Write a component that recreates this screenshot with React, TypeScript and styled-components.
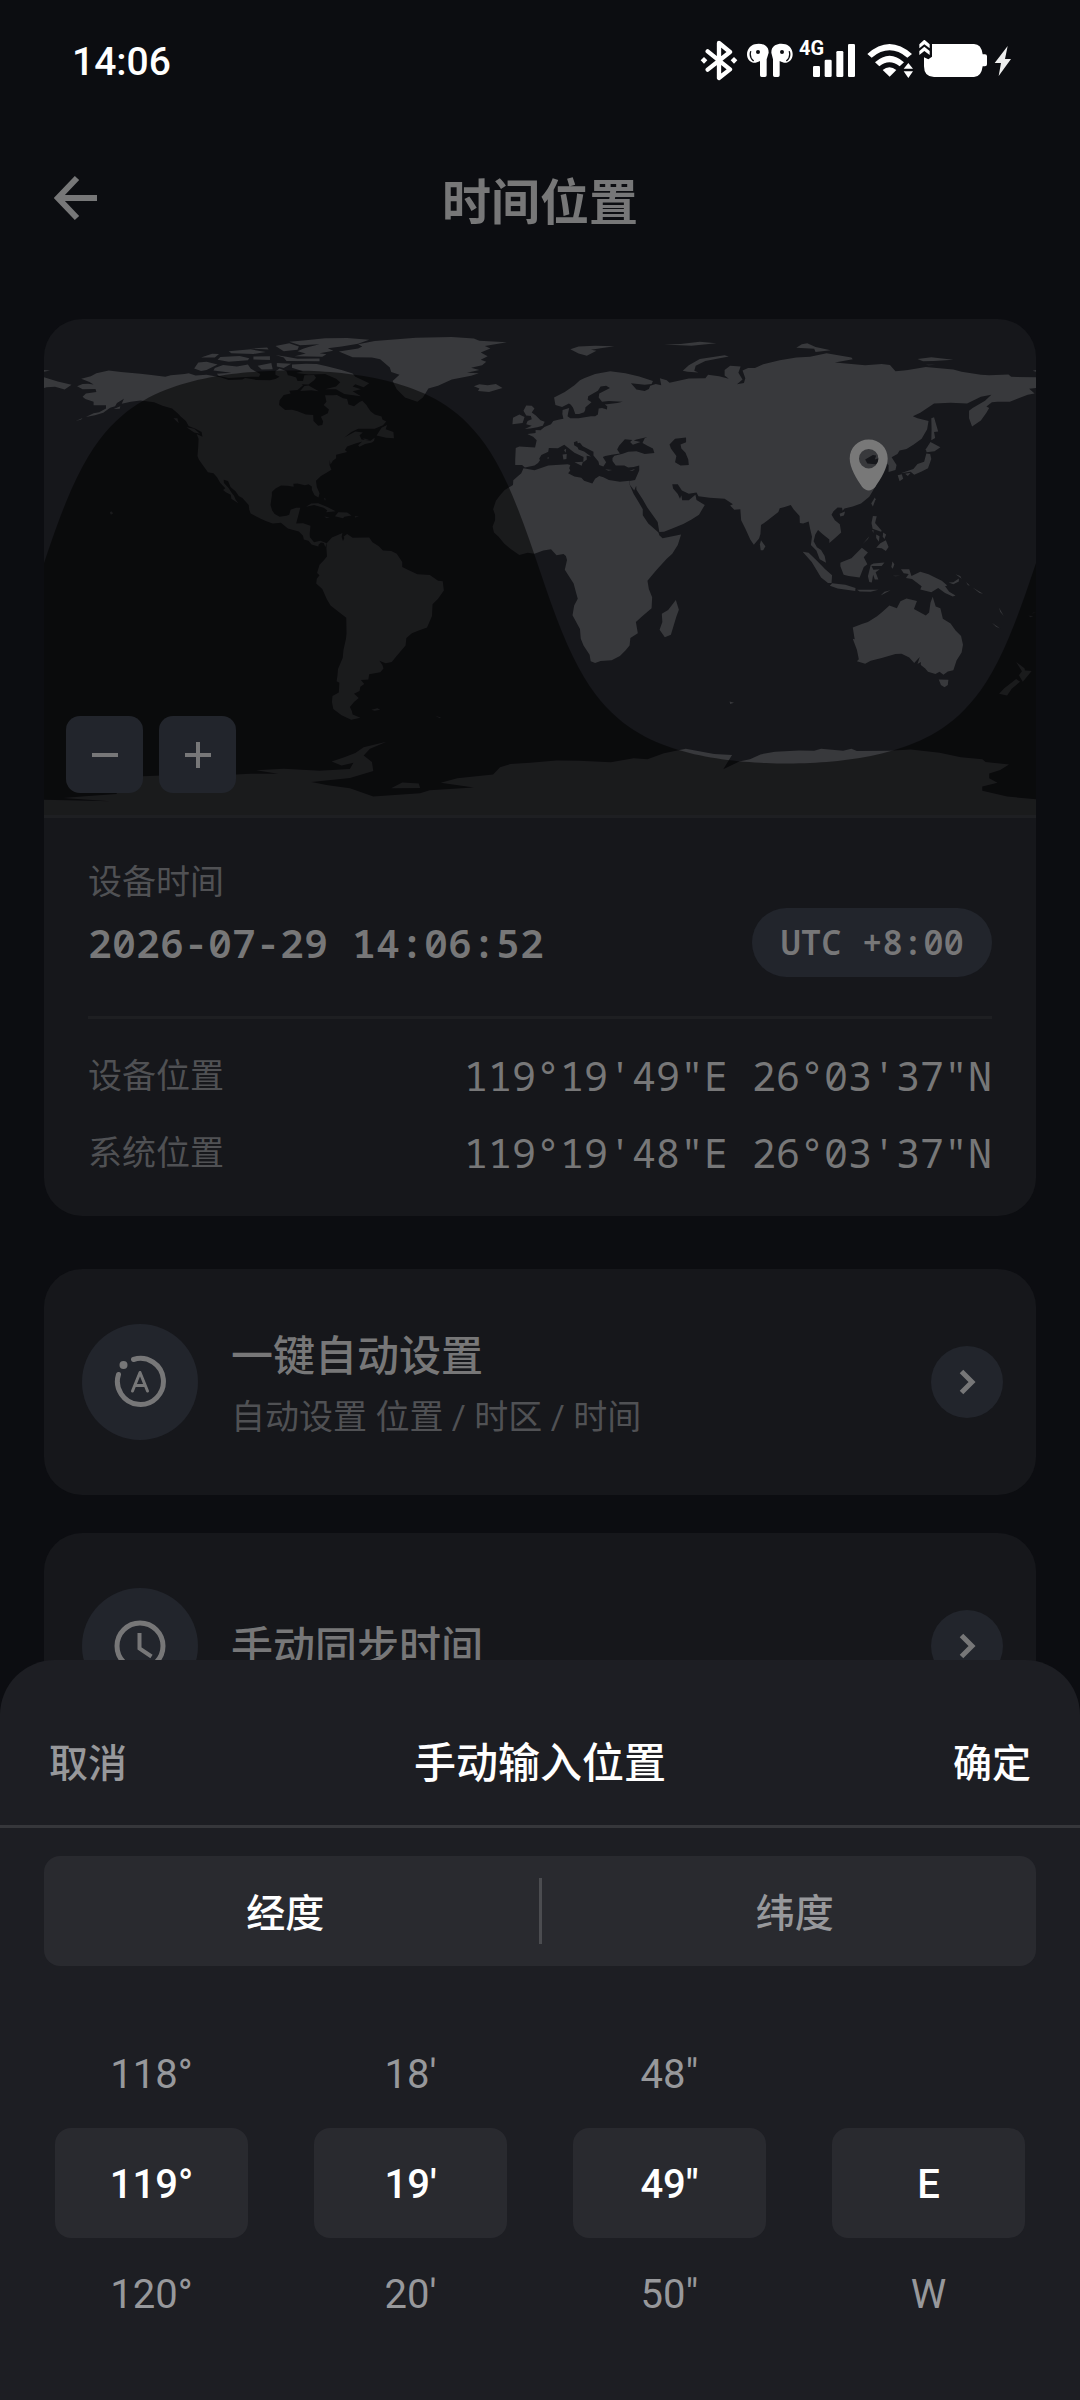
import { useState } from 'react';
import styled, { createGlobalStyle } from 'styled-components';

const GlobalStyle = createGlobalStyle`
  * {
    box-sizing: border-box;
  }
  body {
    margin: 0;
    background-color: #0c0d11;
    font-family: Roboto, "Noto Sans CJK SC", sans-serif;
  }
  button {
    padding: 0;
    border: none;
    background: none;
    color: inherit;
    font: inherit;
    cursor: pointer;
  }
  svg {
    display: block;
    flex: none;
  }
`;

const Page = styled.div`
  min-height: 100vh;
  color: #777778;
`;
const StatusBar = styled.div`
  display: flex;
  align-items: center;
  justify-content: space-between;
  height: 120px;
  padding: 0 68px 0 72px;
  color: #fff;
`;
const Clock = styled.span`
  padding-top: 3px;
  font-size: 39px;
  font-weight: 500;
`;
const StatusIcons = styled.div`
  display: flex;
  gap: 6px;
`;
const Header = styled.header`
  display: grid;
  grid-template-columns: 1fr auto 1fr;
  align-items: center;
  height: 156px;
  margin-bottom: 43px;
  padding: 0 54px;
`;
const BackButton = styled.button`
  justify-self: start;
`;
const PageTitle = styled.h1`
  margin: 0;
  font-size: 49px;
  font-weight: 700;
`;
const Content = styled.main`
  display: flex;
  flex-direction: column;
  gap: 38px;
  padding: 0 44px;
`;
const Card = styled.section`
  overflow: hidden;
  border-radius: 38px;
  background-color: #16171b;
`;
const DeviceCard = styled(Card)`
  margin-bottom: 15px;
`;
const MapBox = styled.div`
  position: relative;
  border-bottom: 3px solid #1e1f22;
`;
const MapSvg = styled.svg`
  width: 100%;
  height: auto;
`;
const ZoomButtons = styled.div`
  position: absolute;
  left: 22px;
  bottom: 22px;
  display: flex;
  gap: 16px;
`;
const ZoomButton = styled.button`
  display: grid;
  place-items: center;
  width: 77px;
  height: 77px;
  border-radius: 14px;
  background-color: #22252c;
`;
const DeviceInfo = styled.div`
  padding: 42px 44px 25px;
`;
const Label = styled.span`
  display: block;
  font-size: 34px;
  line-height: 44px;
  color: #505154;
`;
const InfoRow = styled.div`
  display: flex;
  align-items: center;
  justify-content: space-between;
  height: 77px;
`;
const DeviceTime = styled.span`
  font-family: "Noto Sans Mono", "DejaVu Sans Mono", monospace;
  font-size: 40px;
  font-weight: 600;
`;
const Coordinates = styled.span`
  font-family: "Noto Sans Mono", "DejaVu Sans Mono", monospace;
  font-size: 40px;
`;
const ZonePill = styled.span`
  padding: 0 28px;
  border-radius: 35px;
  background-color: #22252c;
  font-family: "Noto Sans Mono", "DejaVu Sans Mono", monospace;
  font-size: 34px;
  font-weight: 600;
  line-height: 69px;
`;
const Divider = styled.hr`
  height: 3px;
  margin: 35px 0 18px;
  border: none;
  background-color: #1e1f22;
`;
const ActionCard = styled(Card)`
  display: flex;
  align-items: center;
  height: 226px;
  padding: 0 33px 0 38px;
`;
const ActionIcon = styled.div`
  display: grid;
  place-items: center;
  width: 116px;
  height: 116px;
  border-radius: 50%;
  background-color: #22252c;
`;
const ActionText = styled.div`
  display: flex;
  flex: 1;
  flex-direction: column;
  gap: 10px;
  margin-left: 33px;
  padding-top: 3px;
`;
const ActionTitle = styled.h2`
  margin: 0;
  font-size: 42px;
  font-weight: 500;
  line-height: 56px;
`;
const ArrowButton = styled.button`
  display: grid;
  place-items: center;
  width: 72px;
  height: 72px;
  border-radius: 50%;
  background-color: #22252c;
`;
const Sheet = styled.div`
  position: fixed;
  right: 0;
  bottom: 0;
  left: 0;
  padding-bottom: 52px;
  border-radius: 55px 55px 0 0;
  background-color: #1d1e23;
  color: #97989b;
`;
const SheetHeader = styled.div`
  display: grid;
  grid-template-columns: 1fr auto 1fr;
  align-items: center;
  height: 168px;
  padding: 34px 49px 0;
  border-bottom: 3px solid #36373b;
`;
const SheetTitle = styled.h2`
  margin: 0;
  font-size: 42px;
  font-weight: 500;
  color: #fff;
`;
const SheetButton = styled.button<{ $primary?: boolean }>`
  justify-self: ${({ $primary }) => ($primary ? 'end' : 'start')};
  font-size: 39px;
  font-weight: 500;
  color: ${({ $primary }) => ($primary ? '#fff' : '#97989b')};
`;
const Tabs = styled.div`
  display: flex;
  align-items: center;
  height: 110px;
  margin: 28px 44px 52px;
  border-radius: 16px;
  background-color: #292a2f;
`;
const Tab = styled.button<{ $active: boolean }>`
  flex: 1;
  padding-bottom: 2px;
  font-size: 39px;
  font-weight: 500;
  color: ${({ $active }) => ($active ? '#fff' : '#97989b')};
`;
const TabDivider = styled.span`
  width: 3px;
  height: 66px;
  margin: 0 12px;
  background-color: #4b4c50;
`;
const Picker = styled.div`
  display: grid;
  grid-template-columns: repeat(4, 1fr);
  gap: 66px;
  padding: 0 55px;
`;
const PickerColumn = styled.div`
  display: grid;
  grid-template-rows: repeat(3, 110px);
`;
const PickerItem = styled.button<{ $selected: boolean }>`
  padding-top: 2px;
  border-radius: 16px;
  background-color: ${({ $selected }) => ($selected ? '#292a2f' : 'transparent')};
  font-size: 40px;
  font-weight: ${({ $selected }) => ($selected ? 500 : 400)};
  color: ${({ $selected }) => ($selected ? '#fff' : '#97989b')};
`;

// Coastlines as "lon,lat" points
const LAND = [
  // North America
  '-168,65.6 -166,66.4 -164,66.5 -162,66.2 -163.5,67.1 -166.5,68.3 -163,69.2 -161,70.3 -156.5,71.3 -152,70.8 -145,70.1 -141,69.7 -136,69 -134,69.6 -129,70 -127.5,70.3 -125,69.5 -121,69.8 -116,68.9 -113,67.9 -108,68 -107,68.6 -103,67.9 -98,67.8 -96,68.2 -94.5,69 -96,69.8 -96,71 -94.5,72 -92,71 -91.5,69.6 -90.5,69.4 -88.5,68.8 -88,67.5 -86,67.5 -85.5,69.6 -82,69.7 -81.3,68.7 -82,67.8 -84,66.2 -86.5,66.3 -86,66 -88,64.2 -91,64 -90.5,63 -93,62.4 -94.5,60.5 -94.7,58.8 -92.5,57 -90,57.1 -88,56.5 -85,55.3 -82.3,55.2 -82.2,53 -80.5,51.3 -79,51.5 -78.7,52.8 -79.5,54.5 -77,55.8 -76.6,57.2 -78.5,58.8 -77.5,60 -78,62.3 -75,62.3 -73.7,62.4 -71.5,61.2 -70,61 -69.5,59 -67.5,58.3 -65.5,59.9 -64.5,60.3 -63,58.8 -62.5,58 -61.5,56.5 -60,55.3 -57.5,54.6 -57.2,53.5 -55.8,52.8 -57,51.4 -60,50.2 -66,50.2 -68.5,49 -71,47 -67,49.2 -64.3,48.8 -65.5,47.8 -64.8,46.3 -61.5,45.8 -60,46.9 -60.2,45.8 -61,45.2 -63.5,44.6 -65.5,43.6 -66,44.2 -64.5,45.5 -67,44.8 -70,43.7 -70.8,42.5 -70,41.7 -74,40.7 -74,39.5 -75.2,38.6 -76,37.2 -76.3,38.8 -76.4,37 -75.7,35.3 -77.8,34 -79.5,33 -81.3,31.3 -81,29 -80,26.8 -80.4,25.2 -81.8,26 -82.8,28 -82.8,29.2 -84,30 -85.3,29.7 -88,30.3 -89.5,30.2 -89.4,29.1 -91.5,29.5 -94,29.6 -96,28.5 -97.3,27.2 -97.3,26 -97.8,22.5 -97.2,20.5 -96.3,19.2 -94.5,18.2 -92,18.6 -91,19 -90.5,20.8 -88.5,21.5 -87,21.5 -87.7,18.8 -88.5,15.8 -86,15.9 -83.3,15 -83.6,12 -83.5,10.8 -82,9 -79.7,9.5 -77.4,8.6 -77.9,7.3 -78.5,8.7 -79.5,8.9 -80.4,8.1 -80.4,7.4 -82.9,8.2 -84,9.5 -85.7,10 -86,11.3 -87.5,12.9 -89.5,13.4 -91.5,14 -94,16.1 -97,15.8 -99.5,16.7 -101.5,17.6 -105,19.4 -105.5,20.8 -105.7,22.5 -108,25 -109.3,25.8 -110.5,27.5 -112.3,29 -113.2,31.2 -114.8,31.7 -114.7,30.5 -113,28.7 -112,27 -111,25.8 -110.5,24.5 -109.5,23.1 -112,24.8 -112.2,26.2 -114,27.1 -115,27.9 -114.2,28.6 -116,30.5 -117.2,32.6 -118.5,34 -120.5,34.4 -122.4,37 -123.8,39 -124.3,40.3 -124,44 -123.9,46.5 -124.6,48.3 -122.5,47.3 -122.8,49 -125,50.2 -127.5,51.2 -128.5,53 -130.3,54.5 -131.5,55.8 -133.5,57.5 -137,58.5 -140,59.8 -145,60.4 -148.5,60 -151.8,59.2 -151,61.1 -153.5,59.5 -154.2,58.3 -156,57.8 -158.5,56 -161.5,55.1 -164.8,54.4 -162,55.8 -160,56.2 -157.5,57.5 -157.5,58.7 -162,58.7 -162,60 -165,61 -166,61.8 -164.8,63 -161,63.5 -161.3,64.6 -166,64.5',
  // Arctic islands
  '-62,82.5 -70,83.1 -78,83 -85,82.3 -91,81.7 -87,80.5 -80,80.8 -84,79.8 -86,79.2 -88,78.3 -85,77.5 -89,76.5 -79,76.3 -77.5,77.2 -80,77.6 -75,78.5 -77,79.4 -72,80 -66,81',
  '-90,73.5 -85,73.8 -81,73.7 -77,72.8 -72,71.5 -68,70.2 -67,69 -62,66.7 -64,65.2 -67,66.3 -68,65.5 -65,64.5 -68,63.8 -65,62 -71,62.8 -74,64.5 -78,64.5 -74,65.5 -72.5,67 -74,68.3 -78,70 -84,69.9 -88.5,70.4 -86,71 -90,72.3',
  '-118,72.2 -115,73.3 -110,72.8 -106,73.5 -105,72 -101.5,70 -102,69 -105,69 -113,68.6 -116.5,69.3 -117.3,70.1 -112,70.5 -118.5,71.3',
  '-125.5,72 -124,74.2 -121,74.5 -117,73.5 -121,71.5 -123,71.1',
  '-96,76.9 -92,76.3 -88,75.6 -80,75.7 -80,74.7 -92,74.8 -93,76',
  '-117,75.2 -116,76.2 -109,76.6 -105.5,75.8 -106,75 -113,74.5',
  '-123,76 -119,77.4 -116.5,77.3 -118,76',
  '-102.5,73 -97.5,74 -97,71.8 -101,71.7',
  '-95.5,74 -90.3,73.8 -93,72.2 -95.5,72.8',
  '-104,76.4 -98,76.5 -98,75.1 -104,75.3',
  '-96,80.2 -91,81.2 -87.5,80 -88,78.8 -93,78.3',
  '-113,78.3 -105,79 -99.5,78 -104,77.3 -112,77.6',
  '-105,79.3 -99,79.7 -98.5,78.9',
  '-87,63.9 -85.5,65.7 -84,65.9 -80.3,63.8 -83,64.1',
  '-73,78.2 -68,76.1 -61,76 -58,75.4 -54.5,72.4 -54,70.8 -51,69.8 -53.5,67.5 -52,64.5 -49,61.5 -44.5,60 -42.5,61.5 -40.5,64.8 -37,65.8 -32,68 -25,69.4 -22.2,70.3 -26.5,70.5 -22,71.5 -25,72.3 -21,73.2 -19.5,74.5 -21.5,75.2 -19,76.5 -21.5,77.8 -18,79.3 -20,80.2 -12,81.6 -22,82.1 -24,82.9 -32,83.5 -45,83.2 -60,82 -66,80.8 -64.5,80 -66,79.3',
  '-59.3,47.7 -57.5,50.5 -55.5,51.5 -56,50 -53.2,49 -53,46.7 -55.8,46.9',
  '-128.3,50.7 -125.5,50.2 -123.4,48.4 -125.5,48.8',
  '-133,54 -131.6,54 -131.1,52.2',
  '-154.7,57.3 -152.3,58.3 -152.5,57.4',
  '-168.5,53 -166,54.1 -166.5,53.5',
  '-64.3,46.6 -62,46.4 -63.5,46.1',
  // Caribbean
  '-84.9,21.9 -83,23 -80.5,23.1 -77,21.7 -74.2,20.2 -77.6,19.9 -77.2,20.6 -78.5,21.5 -82,22.5',
  '-74.4,18.4 -73.2,19.9 -70,19.8 -68.4,18.7 -71,18.2 -71.5,17.7',
  '-78.3,18.3 -76.3,18 -77.5,17.8',
  '-67.2,18.4 -65.7,18.3 -67.1,18',
  '-156.1,19.8 -155.6,20.2 -154.9,19.5 -155.7,19',
  '-78.4,25 -77.8,24.8 -78,24',
  // South America
  '-77.4,8.6 -75.5,10.7 -74,11.3 -71.7,12.3 -72,11 -71.5,9.3 -71,10.5 -71.3,11 -70,12 -68,10.6 -62,10.7 -60.8,9 -58.5,7.5 -57,6 -54,5.8 -52,4.8 -50,1.8 -50,0 -48,-1 -44.5,-2.6 -40,-2.9 -37,-5 -35.3,-5.2 -34.9,-8.5 -37,-11.5 -39,-13.5 -39.2,-17.8 -41,-22 -44,-23 -46.5,-24 -48.5,-25.8 -48.8,-28.5 -50.5,-30.5 -52.2,-32.5 -53.8,-34.5 -56,-34.9 -58.3,-34 -57.2,-35.6 -56.8,-36.8 -58,-38.2 -62,-38.9 -62.3,-40.8 -65,-41 -63.8,-42.5 -65.2,-43.5 -65.5,-45 -67.5,-46 -65.8,-47.5 -67.5,-49 -69,-50.8 -68.3,-52.3 -68,-53.5 -65.2,-54.7 -68.5,-55.4 -72,-53.8 -75,-51.5 -75.5,-49 -75.3,-46.8 -73,-45.5 -72.8,-42 -73.8,-41.5 -73.5,-39.5 -73.3,-37 -71.6,-33 -71.3,-30 -70.4,-26 -70.2,-24 -70.3,-18.4 -73,-16.3 -76,-14 -77.3,-11.8 -79,-8 -81.2,-6 -81,-4.3 -80,-3 -80.9,-2.2 -80,0.8 -78.5,2.4 -77.3,3.8 -77.5,6.8',
  '-61.2,-51.8 -59,-51.3 -58,-51.8 -60,-52.2',
  '-38,-54 -36,-54.6 -36.3,-54.9',
  // Eurasia
  '-9,38.8 -8.8,43.2 -7.5,43.7 -1.8,43.4 -1.2,46 -2.5,47.3 -4.6,48.3 -1.6,48.6 -1.6,49.7 0.2,49.6 1.6,50.8 4,51.8 4.8,53 7,53.5 8.5,53.8 8.1,55.5 8.2,57 10.6,57.7 10.3,56.3 10,54.7 11,54 14,54 18.5,54.7 20,54.7 21,55.3 21.3,57.5 22.5,57.7 24.3,57.2 24.4,58.3 23.5,59 28,59.5 30,60 25,60.2 22.5,60 21.3,61.5 21.5,63 25.4,65 24,65.8 22,65.5 21,64 17.5,62 17.3,60.7 18.7,59.8 16.5,58 16.4,57 16,56.2 14.2,55.5 12.8,55.5 12,57.8 11.2,58.9 10.5,59.3 8,58.1 5.6,58.8 5.1,61.5 9,63.5 12.5,66 14.5,67.8 16,68.5 20,70 25.5,71 31,70.3 36,69.1 41,67.5 40.5,66.4 38,66.1 33,66.7 35,64.4 38,63.9 39.5,64.6 40,65.8 42,66.4 44,66 43.5,68.5 46,67.8 47,66.9 54,68.4 60,68.5 61,69.8 65,69.2 68.5,68.3 67,69.5 67,71.5 69,73 72.8,72.8 72,70.5 73.5,68 71.5,66.3 74,66.8 74.5,68.5 73.5,71.3 75.5,72.2 78,72.2 81,73.6 87,75 93,76 98,76.3 104,77.6 113,76 113.5,75.4 107,74.2 113,73.7 118,73.2 124,73.7 127,73.3 129,71 132,71.3 133.5,71.5 140,72.6 150,71.7 153,70.9 160,69.8 163,69.6 170,69.9 171,69 180,68.9 180,65 177.5,64.7 179.5,63 177,62.5 170.5,60 166,60 164,59.8 162,58.2 163,57.7 162,56 160,53.2 156.8,51 155.7,54 155.7,56.7 157,57.7 161.5,60.3 163.8,62.5 160,61.8 155,59.3 149,59.6 143,59.3 138,56 135.3,54.7 137,54 141,53 140.5,50 138.5,46.5 135.5,44.4 133,42.8 130.5,42.3 129.7,41 127.6,39.8 129.4,37 129,35.2 126.5,34.5 126.5,37 125,38 124.5,40 121.5,39 122,40.5 120.8,40.6 118,39 118.8,37.6 122.5,37.2 119.3,35 120.8,33 121.8,31.8 121,30.5 121.9,29.5 119.5,25.5 116.5,23 113.5,22 110.5,21.2 109.8,20.4 109.6,21.5 108,21.6 106.5,20.2 105.8,19 107,17 108.8,15.5 109.3,12.5 107,10.4 105,8.7 105,10 102.5,12 100.9,13.4 99.9,11.8 99.3,9.3 100.5,7.2 102,6.2 103.3,4 103.8,1.5 101.5,2.8 100.3,6 98.3,8 98.7,11 98,14 97.5,16.5 95.5,15.8 94.3,16 94.2,18.5 92,21 91,22.5 88.5,21.7 87,21.3 86.5,20 82.3,16.7 80.2,15.2 80,12 79.5,10.3 77.6,8.1 76.3,10 74.5,14 73,17 72.7,21 70.5,20.8 69,22.3 70,22.8 67,24.8 61.6,25.1 57.5,25.7 56.8,27 54,26.6 51.5,27.8 50,30 48,30 48.3,28.5 50,26.5 50.8,24.8 51.3,26 51.6,24.2 54,24.2 56.4,26.2 56.8,24.3 59.8,22.5 57.7,19 55,17.2 52,15.6 48,14 45,12.8 43.3,12.7 42.7,16.3 39,21.5 37.3,24.5 35,28 34.9,29.5 34.2,27.8 32.5,29.9 32.5,31.2 34.5,31.6 36,35 36,36.8 34,36.3 32,36.1 30.6,36.8 27.5,36.8 26.3,38.5 26.3,39.6 27,40.4 30,41.1 32,41.8 35,42 38,41 41.5,41.4 41,43 39,44 37.2,45 38,46.7 39,47.2 35,46.3 34,45.9 36.5,45.4 33.7,44.4 32.7,45.4 33.5,46.1 30.8,46.4 28.7,44 28,42.6 29,41.2 26,40.7 23.7,40.3 22.8,39.9 24,38 23,36.5 21.5,37 21.2,38.3 19.4,40.5 19.4,41.8 15.5,43.8 14.5,45.1 13.7,44.9 13.5,45.7 12.3,45.3 12.4,44.2 13.6,43.5 14,42.6 16,41.9 18.5,40.1 16.9,40.4 17,39 15.7,38 15.8,39.9 12.5,41.5 10.3,43.2 8.8,44.4 6.5,43.1 3.2,43.2 3,41.8 0.5,40.6 -0.3,39.3 0,38.7 -0.7,37.7 -2,36.8 -5.5,36.1 -6.5,37 -9,37',
  '-180,68.9 -175,67.3 -170,66.1 -172.5,64.4 -176,65.4 -179,65.2 -180,65',
  // Africa
  '-6,35.8 -2,35.1 3,36.8 10,37.3 11,37 10.6,35.8 11,35 10.2,34 12.5,32.8 15,32.4 16,31.3 19,30.3 20,32 21.5,33 23,32.6 25,31.6 29,30.9 32.5,31.3 32.5,29.9 34,26.5 35.5,24 37.3,21 37.3,18.8 39.3,15.8 43,12.5 43.3,11.5 44.5,10.4 51.2,11.8 50,8 48,4.8 46,3 43,-0.3 41.5,-2 39,-5 39.5,-8 40.7,-11 40.5,-15 37,-18 34.8,-20 35.5,-24 32.8,-25.8 32.5,-28.5 31,-30.3 29,-32.3 26,-33.8 22,-34.1 20,-34.8 18.4,-34.2 18,-31.8 15.8,-28.5 14.8,-26 14.5,-22.5 11.8,-17.5 12.4,-14 13.7,-11.5 13,-9 12.2,-6 9,-1 9.8,2.5 9.4,4 8.5,4.7 6,4.3 4,6.4 1.2,6 -2,4.8 -4.5,5.2 -7.5,4.4 -10.5,6.4 -13,8.5 -15,11 -16.7,12.5 -17.2,14.7 -16.3,17 -16.3,19 -17,21 -16,24 -14.5,26 -12.8,27.9 -9.8,29.8 -9.7,31.5 -6.8,34',
  '49.3,-12 50.4,-15.5 49.5,-18 47.5,-24.6 45.3,-25.5 43.4,-22.8 44.4,-20 44.2,-17 46.5,-15.6',
  // Europe and Mediterranean islands
  '-5.5,50.1 -3,51.3 -5,51.8 -4.5,53 -3,53.6 -3.3,54.8 -5,55 -6,56.7 -5,58.6 -3,58.5 -2,57.5 -3,56.1 -1.5,55 0.2,53.3 1.7,52.7 1,51.3 -1,50.7 -3.5,50.3',
  '-10,51.8 -9.8,54.2 -7.5,55.3 -5.6,54.4 -6.3,52.3',
  '-24,65.6 -22,66.3 -19,66 -16,66.4 -13.6,65 -18.5,63.5 -22.5,63.9 -22,64.8',
  '11,79 14,80 20,80.3 27,80.1 22,79.4 18.5,78.8 20.5,78.5 17,76.7 14,77.5',
  '51.8,71.2 54,73.2 58,75.5 67,76.8 68.5,76.4 60,74.8 56.5,73 56,71.2 57.5,70.6 53.5,70.9',
  '45,80.7 51,80.9 58,81.7 64,81.2 55,80.3',
  '95,80.8 97,81.2 100,79.8 105.5,78.7 100,78 99.5,79.2 93,79.6',
  '137,75.5 142,76.1 150,75.2 143,74.8 139,74.7',
  '140,73.4 143.5,73.4 141,73.2',
  '178.8,71.2 180,71.5 180,70.9',
  '-180,71.5 -177.8,71.3 -180,70.9',
  '12.5,38 15.6,38.2 15.1,36.7',
  '8.2,40.8 9.7,41 9.6,39.2 8.5,39',
  '8.7,42.5 9.5,42.9 9.3,41.5',
  '23.6,35.5 26.2,35.2 24.8,34.9',
  '32.4,34.9 34.5,35.6 33.7,34.9',
  '2.4,39.6 3.3,39.8 3.1,39.3',
  // Asia and Pacific islands
  '79.8,8.2 80.2,9.7 81.8,7.5 81,6.1 80.1,6.1',
  '142,54 143,54.3 144.5,49.2 143,49 143.4,46.8 142,46 142.1,50',
  '140,42.7 141.7,45.4 145.3,43.5 143.2,42 140.3,41.6',
  '130.9,34 135.5,35.6 137,37.4 139.4,38.2 140.2,41.2 141.6,41 142,39.2 140.8,35.8 138.5,34.7 135.8,33.5 134.5,34.6',
  '129.8,33.3 131.3,33.7 131.8,32 130.5,31.1',
  '132.5,33.8 134.5,34.2 133.5,33',
  '120.2,23 121.5,25.2 121.8,24.6 120.8,22',
  '108.7,19.3 110.7,20.1 110.3,18.7 109,18.3',
  '120.3,16 120.8,18.5 122.2,18.4 121.6,16 124,13.2 123.8,12.8 120.7,13.9',
  '121,13.4 121,12.3 120.5,13.3',
  '122,11.8 123.2,11.2 123,9.2 122,10.5',
  '124.5,12.5 125.6,11.8 125,10.2 124.4,11',
  '122,7 123.5,8.6 125.5,9.7 126.5,7.3 125.5,5.8 124,6.8',
  '117.2,8.4 119.5,11.2 119,10.2',
  '109,1.5 110,2 113,3.2 116.8,7 119,5.3 117.5,3.5 118.8,1 117.5,0 116,-3.8 112,-3.3 110.2,-2.8 109,0.3',
  '95.3,5.5 97.5,5.2 100.5,2.3 103.5,-0.8 106,-3 105.8,-5.8 104.5,-5.8 102,-3.8 100.3,-1 98.6,1.8',
  '105.2,-6.8 106,-5.9 110.8,-6.4 114.5,-7.6 114.4,-8.7 108,-7.8',
  '115,-8.3 119,-8.3 122.8,-8.3 120,-9 116,-8.9',
  '123.6,-10.3 125,-9 127.2,-8.4 125,-9.6',
  '119,-3.4 120,0.7 121,1.3 125,1.6 124,0.4 120.3,0.4 121,-1 123.3,-0.8 121.8,-1.9 122.8,-4.5 121.5,-4.5 120.9,-2.8 120.4,-5.6 119.5,-5.4',
  '127.5,0 127.9,2 128.6,1 128,-0.6',
  '128,-3.2 130.8,-3.2 129,-3.4',
  '131,-0.8 134,-0.8 134.8,-3.3 138,-1.7 141,-2.6 145.8,-5 147.8,-6.7 147,-7 148.5,-9 150.8,-10.3 149.8,-10.7 147,-9.4 144.5,-7.6 142,-9.2 138,-8.2 138.5,-7 135,-4.4 132.8,-4 133.8,-2.5 132,-2.3',
  '148.3,-5.6 150,-5.5 152,-4.2 152,-5.3 150,-6.3',
  '150.8,-2.6 153,-4.3 152.5,-3.3',
  '154.6,-5.4 156,-6.7 155.3,-6.6',
  '157,-7.4 160.8,-9.7 159.5,-9.4',
  '164,-20.2 167,-22.3 165.5,-21.7',
  '166.6,-14.8 168.3,-17.8 167,-16.2',
  '177.3,-17.7 179,-17.8 178,-18.2',
  '178.5,-16.8 180,-16.2 179,-16.8',
  // Australia and New Zealand
  '113.5,-22 114.2,-26.2 113.5,-26 115,-30 115.7,-33.5 115,-34.2 118,-35.1 120,-34 124,-33 129,-31.6 131.2,-31.5 134,-32.8 135.8,-34.8 137.8,-32.7 137,-35.2 138.2,-34.5 138.2,-35.6 139.8,-36.8 140.8,-38 143.5,-38.8 145,-38 146.4,-39.1 148,-37.9 150,-37.5 151.2,-33.8 153,-31 153.5,-28.2 152.8,-25 150.8,-23 149,-20.5 146.2,-18.8 145.3,-15 143.6,-14.3 142.5,-10.8 141.7,-13 141.2,-16.5 140,-17.6 135.7,-15.2 136.8,-12.3 133,-11.4 130.8,-12.4 129.5,-15 126.8,-14 124.2,-16.3 122.2,-18 119,-20 116.8,-20.7',
  '144.7,-40.8 148.2,-40.9 148,-42.8 146.8,-43.6 145.5,-42.8',
  '172.8,-34.5 175.8,-36.7 176,-37.6 178.4,-37.7 177,-39.5 175.2,-41.6 173.8,-39.3 174.9,-37.8',
  '172.8,-40.6 174.2,-41.6 171.2,-44.2 169.5,-46.6 166.6,-46 168.5,-44',
  '68.8,-48.8 70.4,-49.3 69,-49.7',
  // Antarctica
  '-180,-84.5 -156,-85 -173,-83.8 -165,-83.2 -153.6,-82.4 -154,-78 -148,-76 -144,-75.9 -135,-75.6 -120,-75.4 -112,-75.4 -105,-75 -95,-75 -103,-73.8 -93,-73.2 -80,-73.9 -69,-73.3 -67.7,-71 -72,-72 -75.6,-70.6 -71,-69 -67,-67.5 -64,-65.4 -55.7,-63.4 -61.7,-66 -64,-68.4 -61,-70.8 -60.5,-74 -69,-76.6 -83,-78 -77,-79.2 -69,-80.3 -60.5,-83.3 -43.5,-82.1 -40,-81 -24,-80 -36,-78.3 -30,-76.7 -17,-75.3 -14.5,-72.7 -10.7,-71.5 -3.5,-71 6,-70.2 14,-70.3 25.7,-70.9 34,-69.4 39,-69.8 45,-67.6 52.9,-66 56.8,-66.7 63.2,-67.9 69.7,-68.2 66.5,-73.4 72.3,-70.6 76.2,-69.8 80,-68 85.3,-67 94,-66.6 99.5,-66.7 102,-66 110,-66.7 113,-66 115,-66.8 126.8,-66.7 134.5,-66.2 145,-67.4 152.7,-69 160.5,-69.8 161.7,-70.8 170.2,-71.7 167,-73.7 163,-74.9 163,-76.7 166,-78.3 160.5,-79.7 160.5,-81.2 169.5,-83.3 180,-84.3 180,-90 -180,-90',
  '-54,-80.3 -50,-78.2 -44,-78.6 -43.5,-80.2',
];

const CASPIAN = '47,44.5 49,46.5 53,47 53,45.3 51,44.5 51.3,43 52.8,41.5 53.8,39 54,37 51,36.8 49,38 49.5,40.3 47.5,43';

// Edge of the night side for the sun's declination and the longitude of noon
const nightPath = (declination: number, noon: number) => {
  const rad = Math.PI / 180;
  const edge: string[] = [];
  for (let lon = -180; lon <= 180; lon += 2) {
    const lat = Math.atan(-Math.cos((lon - noon) * rad) / Math.tan(declination * rad)) / rad;
    edge.push(`${lon} ${lat.toFixed(2)}`);
  }
  return `M${edge.join('L')}L180 -90L-180 -90Z`;
};

const WorldMap = () => (
  <MapSvg viewBox="0 0 992 496" role="img" aria-label="世界地图">
    <g transform="translate(496 248) scale(2.7556 -2.7556)">
      <g fill="#38393c">
        {LAND.map((points) => (
          <polygon key={points} points={points} />
        ))}
      </g>
      <polygon points={CASPIAN} fill="#16171b" />
      <path d={nightPath(18.7, 89.5)} fill="#000" fillOpacity="0.52" />
    </g>
    <path
      fill="#787878"
      fillRule="evenodd"
      d="M824.7 120.5c-10.8 0-19 8.200-19 19 0 9.500 7 20.500 12.500 28.500 4 4.500 9 4.500 13 0 5.500-8 12.500-19 12.500-28.500 0-10.800-8.200-19-19-19zM824.7 130a9.700 9.700 0 1 1 0 19.400a9.700 9.700 0 1 1 0-19.400z"
    />
  </MapSvg>
);

const BluetoothIcon = () => (
  <svg width="40" height="41" viewBox="120 57 120 123" fill="none" stroke="#fff" strokeWidth="13" strokeLinejoin="round" strokeLinecap="round">
    <path d="M143 91L210 145L177 171V66L210 93L143 146" />
    <g fill="#fff" stroke="none">
      <path d="M132 108l10 10-10 10-10-10zM222 108l10 10-10 10-10-10z" />
    </g>
  </svg>
);

const PodsIcon = () => (
  <svg width="47" height="41" viewBox="258 57 141 123">
    <g fill="#fff">
      <path d="M284 70c8-3 22-3 31 3 8 5 11 12 11 22l-6 20v48q0 5-5 5h-10q-5 0-5-5v-43c-8 4-14 6-20 5-12-2-19-12-19-25 0-14 9-26 23-30z" />
      <path d="M376 70c-8-3-22-3-31 3-8 5-11 12-11 22l5 20v48q0 5 5 5h10q5 0 5-5v-43c8 4 14 6 20 5 12-2 19-12 19-25 0-14-8-26-22-30z" />
    </g>
    <g fill="none" stroke="#0c0d11" strokeWidth="4" strokeLinecap="round">
      <path d="M272 92c-3 10 0 20 8 27M388 92c3 10 0 20-8 27" />
    </g>
    <circle cx="294" cy="93" r="6" fill="#0c0d11" />
    <circle cx="366" cy="93" r="6" fill="#0c0d11" />
  </svg>
);

const SignalSvg = styled.svg`
  overflow: visible;
`;
const SignalIcon = () => (
  <SignalSvg width="62" height="41" viewBox="417 57 186 123" fill="#fff">
    <text x="417" y="101" fontSize="60" fontWeight="700" fontFamily="Roboto, sans-serif">4G</text>
    <rect x="459" y="135" width="21" height="33" rx="4" />
    <rect x="494" y="116" width="21" height="52" rx="4" />
    <rect x="529" y="90" width="21" height="78" rx="4" />
    <rect x="564" y="69" width="21" height="99" rx="4" />
  </SignalSvg>
);

const WifiIcon = () => (
  <svg width="46" height="41" viewBox="621 57 138 123" fill="#fff">
    <path d="M622 99q66-60 134 0l-14 11q-53-44-107 0z" />
    <path d="M645 124q44-39 87 0l-13 12q-31-24-61 0z" />
    <path d="M668 147q20-17 41 0l-20 20z" />
    <path d="M745 126l14 17h-28zM731 151h28l-14 20z" />
  </svg>
);

const BatteryIcon = () => (
  <svg width="69" height="41" viewBox="777 57 207 123" fill="#fff">
    <path d="M816 69h126q22 0 26 31h7q6 0 6 6v24q0 6-6 6h-7q-4 32-26 32H822q-30 0-30-32v-27l13 6 11-8z" />
    <path d="M778 70l15-14 16 14v12l-16-12-15 12zM778 90l15-13 16 13v12l-16-12-15 12z" />
  </svg>
);

const BoltIcon = () => (
  <svg width="18" height="41" viewBox="1002 57 54 123" fill="#eee">
    <path d="M1043 75l-39 51h19l-7 39 37-51h-18z" />
  </svg>
);

const AutoIcon = () => (
  <svg width="54" height="54" viewBox="0 0 54 54" fill="none" stroke="#777778" strokeLinecap="round">
    <path d="M20.500 4.500A23 23 0 1 1 5.500 19.500" strokeWidth="5" />
    <circle cx="10.500" cy="10" r="4" fill="#777778" stroke="none" />
    <path d="M19.500 36L27 17.500L34.500 36M22 30.500h10" strokeWidth="3" strokeLinejoin="round" />
  </svg>
);

const ClockIcon = () => (
  <svg width="54" height="54" viewBox="0 0 54 54" fill="none" stroke="#777778" strokeWidth="5">
    <circle cx="27" cy="27" r="23" />
    <path d="M26.500 14v15.500l12 8" strokeWidth="4" />
  </svg>
);

const ChevronIcon = () => (
  <svg width="26" height="26" viewBox="0 0 26 26" fill="none" stroke="#777778" strokeWidth="5">
    <path d="M7.500 2.500L18 13L7.500 23.500" />
  </svg>
);

const LOCATIONS = [
  { label: '设备位置', value: '119°19\'49"E 26°03\'37"N' },
  { label: '系统位置', value: '119°19\'48"E 26°03\'37"N' },
];

const COLUMNS = [
  { name: '度', items: ['118°', '119°', '120°'] },
  { name: '分', items: ["18'", "19'", "20'"] },
  { name: '秒', items: ['48"', '49"', '50"'] },
  { name: '方向', items: ['', 'E', 'W'] },
];

export default function App() {
  const [tab, setTab] = useState('经度');

  return (
    <Page>
      <GlobalStyle />
      <StatusBar>
        <Clock>14:06</Clock>
        <StatusIcons>
          <BluetoothIcon />
          <PodsIcon />
          <SignalIcon />
          <WifiIcon />
          <BatteryIcon />
          <BoltIcon />
        </StatusIcons>
      </StatusBar>
      <Header>
        <BackButton aria-label="返回">
          <svg width="44" height="46" viewBox="0 0 44 46" fill="none" stroke="#777778" strokeWidth="6">
            <path d="M43 23H5M23 3L4 23L23 43" />
          </svg>
        </BackButton>
        <PageTitle>时间位置</PageTitle>
      </Header>
      <Content>
        <DeviceCard>
          <MapBox>
            <WorldMap />
            <ZoomButtons>
              <ZoomButton aria-label="缩小">
                <svg width="26" height="26" viewBox="0 0 26 26" stroke="#777778" strokeWidth="4">
                  <path d="M0 13h26" />
                </svg>
              </ZoomButton>
              <ZoomButton aria-label="放大">
                <svg width="26" height="26" viewBox="0 0 26 26" stroke="#777778" strokeWidth="4">
                  <path d="M0 13h26M13 0v26" />
                </svg>
              </ZoomButton>
            </ZoomButtons>
          </MapBox>
          <DeviceInfo>
            <Label>设备时间</Label>
            <InfoRow>
              <DeviceTime>2026-07-29 14:06:52</DeviceTime>
              <ZonePill>UTC +8:00</ZonePill>
            </InfoRow>
            <Divider />
            {LOCATIONS.map((row) => (
              <InfoRow key={row.label}>
                <Label>{row.label}</Label>
                <Coordinates>{row.value}</Coordinates>
              </InfoRow>
            ))}
          </DeviceInfo>
        </DeviceCard>
        <ActionCard>
          <ActionIcon>
            <AutoIcon />
          </ActionIcon>
          <ActionText>
            <ActionTitle>一键自动设置</ActionTitle>
            <Label>自动设置 位置 / 时区 / 时间</Label>
          </ActionText>
          <ArrowButton aria-label="一键自动设置">
            <ChevronIcon />
          </ArrowButton>
        </ActionCard>
        <ActionCard>
          <ActionIcon>
            <ClockIcon />
          </ActionIcon>
          <ActionText>
            <ActionTitle>手动同步时间</ActionTitle>
          </ActionText>
          <ArrowButton aria-label="手动同步时间">
            <ChevronIcon />
          </ArrowButton>
        </ActionCard>
      </Content>
      <Sheet role="dialog" aria-label="手动输入位置">
        <SheetHeader>
          <SheetButton>取消</SheetButton>
          <SheetTitle>手动输入位置</SheetTitle>
          <SheetButton $primary>确定</SheetButton>
        </SheetHeader>
        <Tabs>
          <Tab $active={tab === '经度'} onClick={() => setTab('经度')}>经度</Tab>
          <TabDivider />
          <Tab $active={tab === '纬度'} onClick={() => setTab('纬度')}>纬度</Tab>
        </Tabs>
        <Picker>
          {COLUMNS.map((column) => (
            <PickerColumn key={column.name} role="group" aria-label={column.name}>
              {column.items.map((item, i) =>
                item ? (
                  <PickerItem key={i} $selected={i === 1}>{item}</PickerItem>
                ) : (
                  <span key={i} />
                )
              )}
            </PickerColumn>
          ))}
        </Picker>
      </Sheet>
    </Page>
  );
}
